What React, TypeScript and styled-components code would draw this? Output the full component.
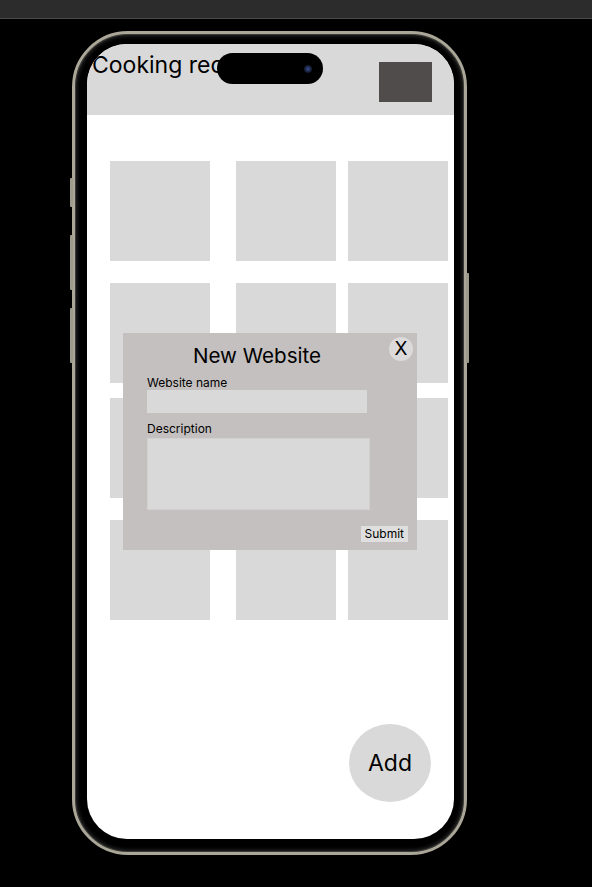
import styled, { createGlobalStyle } from "styled-components";

const GlobalStyle = createGlobalStyle`
  html, body {
    margin: 0;
    padding: 0;
    background: #000;
  }
  body {
    font-family: Inter, "Noto Sans", sans-serif;
    color: #000;
  }
`;

const tiles = Array.from({ length: 12 }, (_, i) => i);

const sideButtons = [
  { side: "left", top: 144, height: 29 },
  { side: "left", top: 201, height: 55 },
  { side: "left", top: 274, height: 55 },
  { side: "right", top: 239, height: 90 },
] as const;

const App = () => {
  return (
    <>
      <GlobalStyle />
      <TopBar />
      <Stage>
        <Phone>
          {sideButtons.map((b, i) => (
            <SideButton key={i} $side={b.side} $top={b.top} $height={b.height} />
          ))}
          <Screen>
            <Header>
              <AppTitle>Cooking recipes</AppTitle>
              <Avatar />
            </Header>
            <Island>
              <Camera />
            </Island>
            <TileGrid>
              {tiles.map((t) => (
                <Tile key={t} />
              ))}
            </TileGrid>
            <Modal>
              <CloseButton>X</CloseButton>
              <FormColumn>
                <ModalTitle>New Website</ModalTitle>
                <Label $gap={8}>Website name</Label>
                <NameInput />
                <Label $gap={9}>Description</Label>
                <DescInput />
              </FormColumn>
              <SubmitRow>
                <SubmitButton>Submit</SubmitButton>
              </SubmitRow>
            </Modal>
            <Footer>
              <AddButton>Add</AddButton>
            </Footer>
          </Screen>
        </Phone>
      </Stage>
    </>
  );
};

const TopBar = styled.div`
  height: 18px;
  background: #2c2c2c;
  border-bottom: 1px solid #4a4a4a;
`;

const Stage = styled.div`
  padding: 12px 0 0 72px;
`;

const Phone = styled.div`
  position: relative;
  width: 395px;
  height: 824px;
  box-sizing: border-box;
  border: 3px solid #aaa798;
  border-radius: 56px;
  background: #000;
  padding: 10px 10px 13px 12px;
  box-shadow: inset 0 0 0 1px #3a3a36, inset 0 0 3px 3px #1a1a1a;
`;

const SideButton = styled.div<{ $side: "left" | "right"; $top: number; $height: number }>`
  position: absolute;
  ${(p) => (p.$side === "left" ? "left: -5px;" : "right: -5px;")}
  top: ${(p) => p.$top}px;
  width: 3px;
  height: ${(p) => p.$height}px;
  background: #9e9b8c;
  border-radius: 1px;
`;

const Screen = styled.div`
  position: relative;
  width: 367px;
  height: 795px;
  background: #fff;
  border-radius: 40px;
  overflow: hidden;
  display: flex;
  flex-direction: column;
`;

const Header = styled.header`
  height: 71px;
  flex-shrink: 0;
  background: #d9d9d9;
  display: flex;
  justify-content: space-between;
  align-items: flex-start;
  padding: 7px 22px 0 5px;
  box-sizing: border-box;
`;

const AppTitle = styled.h1`
  margin: 0;
  font-size: 23px;
  font-weight: 400;
  white-space: nowrap;
`;

const Avatar = styled.div`
  width: 53px;
  height: 40px;
  margin-top: 11px;
  background: #514c4c;
`;

const Island = styled.div`
  position: absolute;
  top: 9px;
  left: 130px;
  width: 106px;
  height: 31px;
  border-radius: 16px;
  background: #000;
  display: flex;
  align-items: center;
  justify-content: flex-end;
  padding-right: 11px;
  box-sizing: border-box;
`;

const Camera = styled.div`
  width: 8px;
  height: 8px;
  border-radius: 50%;
  background: radial-gradient(circle, #3b4f8f 0%, #16203a 55%, #05070c 100%);
`;

const TileGrid = styled.div`
  display: grid;
  grid-template-columns: 126px 112px 100px;
  grid-template-rows: 122px 115px 122px 100px;
  margin: 46px 0 0 23px;
`;

const Tile = styled.div`
  width: 100px;
  height: 100px;
  background: #d9d9d9;
`;

const Modal = styled.div`
  position: absolute;
  top: 289px;
  left: 36px;
  width: 294px;
  height: 217px;
  box-sizing: border-box;
  background: #c4c0bf;
  padding: 11px 0 0 24px;
  display: flex;
  flex-direction: column;
`;

const CloseButton = styled.button`
  position: absolute;
  top: 4px;
  right: 4px;
  width: 24px;
  height: 24px;
  border: none;
  border-radius: 50%;
  background: #dcdada;
  padding: 0;
  font-family: Inter, sans-serif;
  font-size: 19px;
  line-height: 24px;
  color: #000;
`;

const FormColumn = styled.div`
  width: 223px;
  display: flex;
  flex-direction: column;
`;

const ModalTitle = styled.h2`
  margin: 0;
  width: 220px;
  text-align: center;
  font-size: 20.6px;
  font-weight: 400;
  line-height: 24px;
`;

const Label = styled.label<{ $gap: number }>`
  margin-top: ${(p) => p.$gap}px;
  font-size: 12px;
  line-height: 14px;
`;

const NameInput = styled.input`
  width: 220px;
  height: 23px;
  box-sizing: border-box;
  border: none;
  background: #d9d9d9;
  outline: none;
`;

const DescInput = styled.textarea`
  margin-top: 2px;
  width: 223px;
  height: 72px;
  box-sizing: border-box;
  border: 1px solid #d2d0d0;
  background: #d9d9d9;
  resize: none;
  outline: none;
`;

const SubmitRow = styled.div`
  display: flex;
  justify-content: flex-end;
  margin-top: 16px;
  padding-right: 9px;
`;

const SubmitButton = styled.button`
  height: 16px;
  padding: 0 4px;
  border: none;
  background: #dfdfdf;
  font-family: Inter, sans-serif;
  font-size: 12px;
  line-height: 16px;
  color: #000;
`;

const Footer = styled.div`
  margin-top: auto;
  display: flex;
  justify-content: flex-end;
  padding: 0 23px 37px 0;
`;

const AddButton = styled.button`
  width: 82px;
  height: 78px;
  border: none;
  border-radius: 50%;
  background: #d9d9d9;
  font-family: Inter, sans-serif;
  font-size: 23px;
  color: #000;
`;

export default App;
